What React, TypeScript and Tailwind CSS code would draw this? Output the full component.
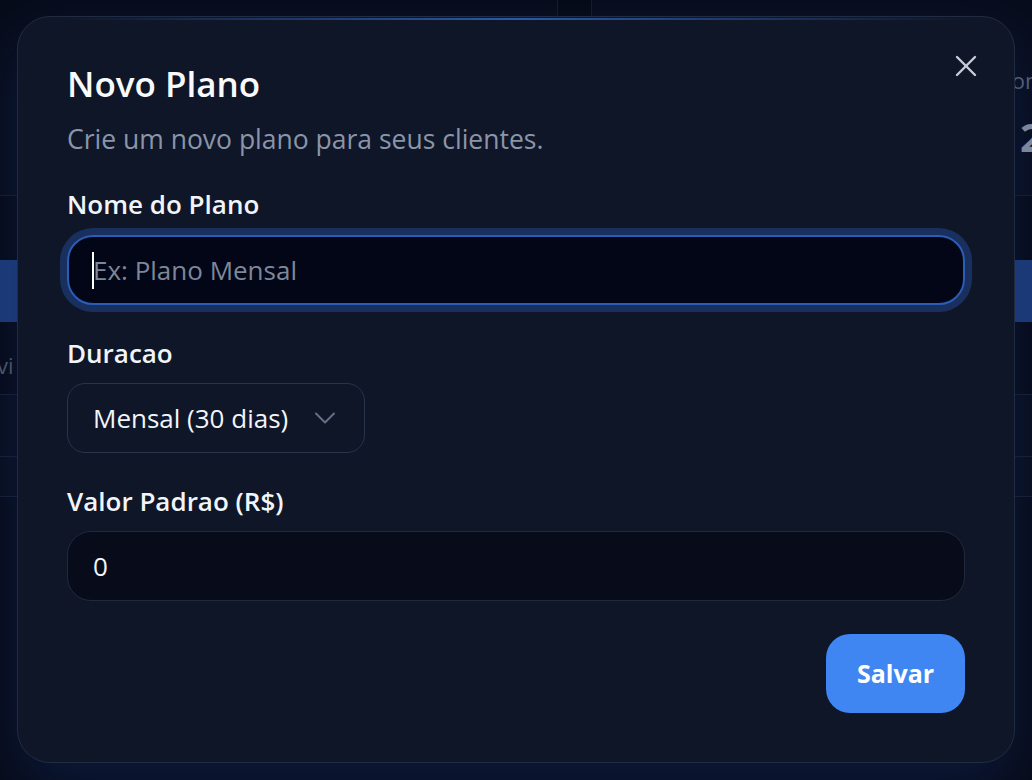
import React from "react";
import { X, ChevronDown } from "lucide-react";

const font = { fontFamily: '"Open Sans", "Noto Sans", "Liberation Sans", sans-serif' };

const Background = () => {
  return (
    <div className="flex flex-col">
      {/* stat cards behind the modal */}
      <div className="flex gap-[33px] h-[236px] -mt-[40px] -ml-[40px]">
        <div className="w-[598px] shrink-0 border border-[#141c2e] bg-[#070c1a] rounded-b-xl" />
        <div className="w-[520px] shrink-0 border border-[#141c2e] bg-[#080d1c] rounded-b-xl flex flex-col pl-[406px] pt-[104px]">
          <span className="text-[22px] leading-[30px] text-[#5b6475] whitespace-nowrap">Conexoes</span>
          <span className="mt-[20px] pl-[22px] text-[40px] leading-[44px] font-bold text-[#8a93a3]">2</span>
        </div>
      </div>
      <div className="mt-[64px] h-[62px] bg-gradient-to-r from-[#1d3a78] via-[#1b3670] to-[#1d3a78]" />
      <div className="flex flex-col">
        <div className="h-[73px] flex items-center pt-[14px] border-b border-[#161e30] text-[#4f5868] text-[22px] -ml-[3px]">
          vi
        </div>
        <div className="h-[62px] border-b border-[#161e30] bg-[#080d1b]" />
        <div className="h-[40px] border-b border-[#161e30] bg-[#080d1b]" />
        <div className="h-[283px] bg-[#070b18]" />
      </div>
    </div>
  );
};

const Field = ({ label, children, top }: { label: string; children: React.ReactNode; top: string }) => (
  <div className={`flex flex-col ${top}`}>
    <label className="text-[26px] leading-[32px] font-semibold text-[#f1f5f9]">{label}</label>
    {children}
  </div>
);

export default function App() {
  return (
    <div className="relative w-[1032px] h-[780px] overflow-hidden bg-[#060a16]" style={font}>
      <Background />

      {/* dialog */}
      <div className="absolute left-[17px] top-[16px] w-[998px] rounded-[33px] border-[1.5px] border-[#222c40] bg-[#0f1628] px-[49px] pt-[45px] pb-[49px] shadow-[0_24px_60px_rgba(23,52,120,0.35)]">
        <div className="absolute top-[1px] left-[40px] right-[40px] h-[2px] bg-gradient-to-r from-transparent via-[#2b59aa] to-transparent" />

        <button className="absolute right-[30px] top-[31px] w-[36px] h-[36px] flex items-center justify-center text-[#c6cdd8]">
          <X size={36} strokeWidth={1.6} />
        </button>

        <h2 className="text-[35px] leading-[44px] font-semibold text-[#f8fafc]">Novo Plano</h2>
        <p className="mt-[17px] text-[26.5px] leading-[32px] text-[#8a95a8]">Crie um novo plano para seus clientes.</p>

        <Field label="Nome do Plano" top="mt-[33px]">
          <div className="relative mt-[15px]">
            <input
              placeholder="Ex: Plano Mensal"
              className="w-full h-[70px] rounded-[26px] border-2 border-[#2b5cb6] bg-[#020616] pl-[24px] text-[26px] text-white placeholder:text-[#7d8799] outline-none shadow-[0_0_0_7px_#19305f]"
            />
            <div className="absolute left-[25px] top-[17px] w-[2px] h-[37px] bg-white" />
          </div>
        </Field>

        <Field label="Duracao" top="mt-[32px]">
          <button className="mt-[14px] w-[298px] h-[70px] rounded-[18px] border-[1.5px] border-[#283449] bg-[#0f1628] pl-[25px] pr-[30px] flex items-center justify-between text-[26px] text-[#f1f5f9]">
            <span>Mensal (30 dias)</span>
            <ChevronDown size={36} strokeWidth={1.3} className="text-[#647085] -mr-[9px]" />
          </button>
        </Field>

        <Field label="Valor Padrao (R$)" top="mt-[32px]">
          <input
            defaultValue="0"
            className="mt-[14px] w-full h-[70px] rounded-[24px] border-[1.5px] border-[#1f2a3d] bg-[#070b1a] pl-[25px] text-[26px] text-[#f1f5f9] outline-none"
          />
        </Field>

        <div className="mt-[33px] flex justify-end">
          <button className="w-[139px] h-[79px] rounded-[24px] bg-[#3f86f3] text-[25px] font-bold text-white">Salvar</button>
        </div>
      </div>
    </div>
  );
}
